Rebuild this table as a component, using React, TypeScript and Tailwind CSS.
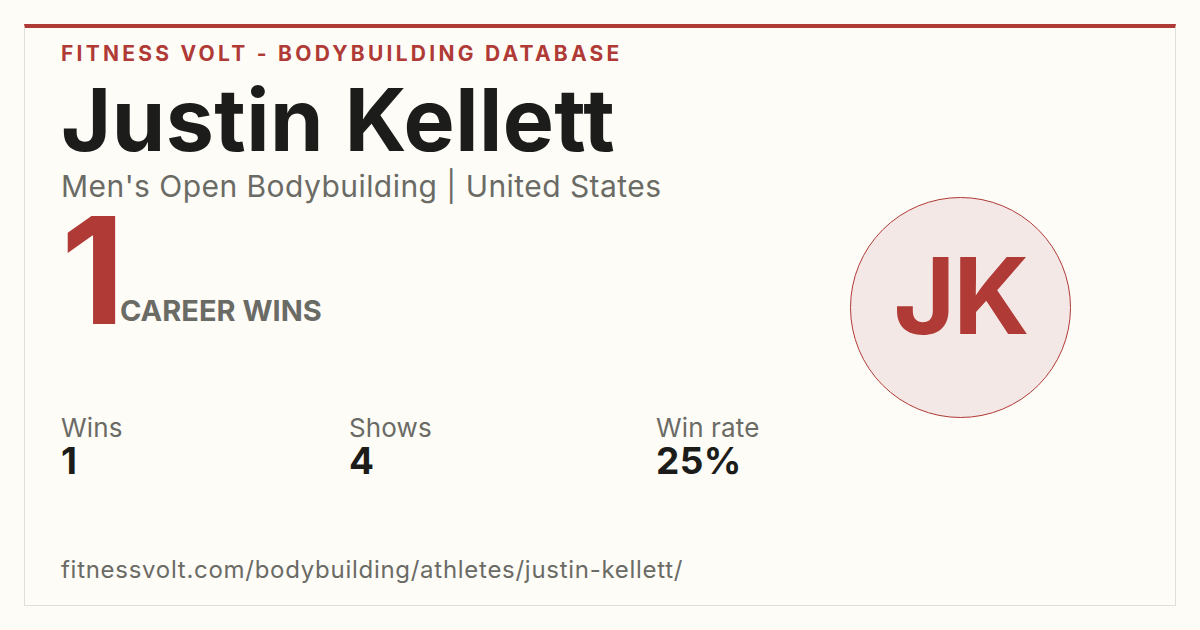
const font = { fontFamily: 'Inter, "Noto Sans", sans-serif' };

// ── Stat column ───────────────────────────────────────────────────────────────

function Stat({ label, value, width }: { label: string; value: string; width: string }) {
  return (
    <div className={`flex flex-col ${width}`}>
      <span className="text-[26px] leading-[30px] font-normal tracking-[0.005em] text-[#6b6b66]">{label}</span>
      <span className="text-[37px] leading-[36px] font-bold tracking-[0.01em] text-[#1c1c1a]">{value}</span>
    </div>
  );
}

// ── Page ──────────────────────────────────────────────────────────────────────

export default function App() {
  return (
    <div className="h-[630px] w-[1200px] bg-[#fdfcf7] p-6" style={font}>
      <div className="flex h-full border border-t-4 border-[#e2dfd8] border-t-[#b03a35] bg-[#fdfcf7]">
        {/* left column */}
        <div className="flex min-w-0 flex-1 flex-col pl-[36px] pt-[13px] pb-[20px]">
          <p className="text-[21px] leading-[26px] font-bold tracking-[0.155em] text-[#b03a35]">
            FITNESS VOLT - BODYBUILDING DATABASE
          </p>
          <h1 className="mt-[4px] text-[86px] leading-[98px] font-bold tracking-[0.005em] text-[#1c1c1a]">
            Justin Kellett
          </h1>
          <p className="text-[30px] leading-[34px] font-normal tracking-[0.015em] text-[#6b6b66]">
            Men's Open Bodybuilding | United States
          </p>
          <div className="mt-[14px] flex items-end gap-[4px]">
            <span className="text-[148px] leading-[108px] font-bold tracking-[-0.06em] text-[#b03a35]">1</span>
            <span className="text-[29px] leading-[28px] font-bold tracking-[0em] text-[#6b6b66]">
              CAREER WINS
            </span>
          </div>
          <div className="mt-[88px] flex">
            <Stat label="Wins" value="1" width="w-[288px]" />
            <Stat label="Shows" value="4" width="w-[307px]" />
            <Stat label="Win rate" value="25%" width="w-[150px]" />
          </div>
          <p className="mt-auto text-[24px] leading-[30px] font-normal tracking-[0.03em] text-[#6b6b66]">
            fitnessvolt.com/bodybuilding/athletes/justin-kellett/
          </p>
        </div>

        {/* right column: avatar */}
        <div className="flex shrink-0 items-center pr-[104px] pb-[18px]">
          <div className="flex h-[221px] w-[221px] items-center justify-center rounded-full border-[1.5px] border-[#b03a35] bg-[#f4e8e7]">
            <span className="mb-[24px] text-[106px] leading-none font-bold tracking-[-0.02em] text-[#b03a35]">JK</span>
          </div>
        </div>
      </div>
    </div>
  );
}
